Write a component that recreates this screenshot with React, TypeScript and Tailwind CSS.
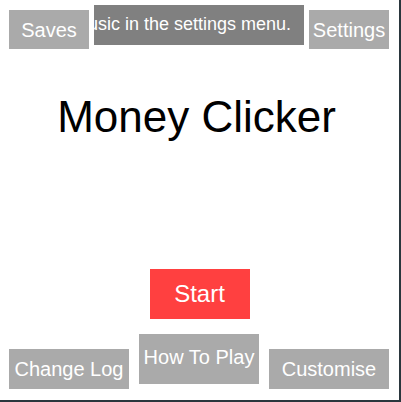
export default function App() {
  return (
    <div className="w-[401px] h-[402px] bg-[#2a363d]" style={{ fontFamily: '"Liberation Sans", Arial, sans-serif' }}>
      <div className="w-[399px] h-[400px] bg-white flex flex-col">
        <div className="flex items-start gap-[5px] pl-[9px]">
          <button className="mt-[10px] w-[80px] h-[39px] bg-[#aaaaaa] text-white text-[20px] flex items-center justify-center">
            Saves
          </button>
          <div className="mt-[5px] w-[210px] h-[40px] bg-[#808080] overflow-hidden flex justify-end items-start pt-[9px] pr-[13px]">
            <span className="whitespace-nowrap text-white text-[18px] leading-[21px]">
              usic in the settings menu.
            </span>
          </div>
          <button className="mt-[10px] w-[80px] h-[39px] bg-[#aaaaaa] text-white text-[20px] flex items-center justify-center">
            Settings
          </button>
        </div>

        <h1 className="mt-[43px] pr-[6px] text-center text-black text-[44px] leading-[50px] font-normal">
          Money Clicker
        </h1>

        <button className="mt-[127px] mx-auto w-[100px] h-[50px] bg-[#ff4040] text-white text-[24px] flex items-center justify-center">
          Start
        </button>

        <div className="mt-[15px] flex items-start gap-[10px] pl-[9px]">
          <button className="mt-[15px] w-[120px] h-[40px] bg-[#aaaaaa] text-white text-[20px] flex items-center justify-center">
            Change Log
          </button>
          <button className="w-[120px] h-[50px] bg-[#aaaaaa] text-white text-[20px] flex items-center justify-center pb-[4px]">
            How To Play
          </button>
          <button className="mt-[15px] w-[120px] h-[40px] bg-[#aaaaaa] text-white text-[20px] flex items-center justify-center">
            Customise
          </button>
        </div>
      </div>
    </div>
  )
}
